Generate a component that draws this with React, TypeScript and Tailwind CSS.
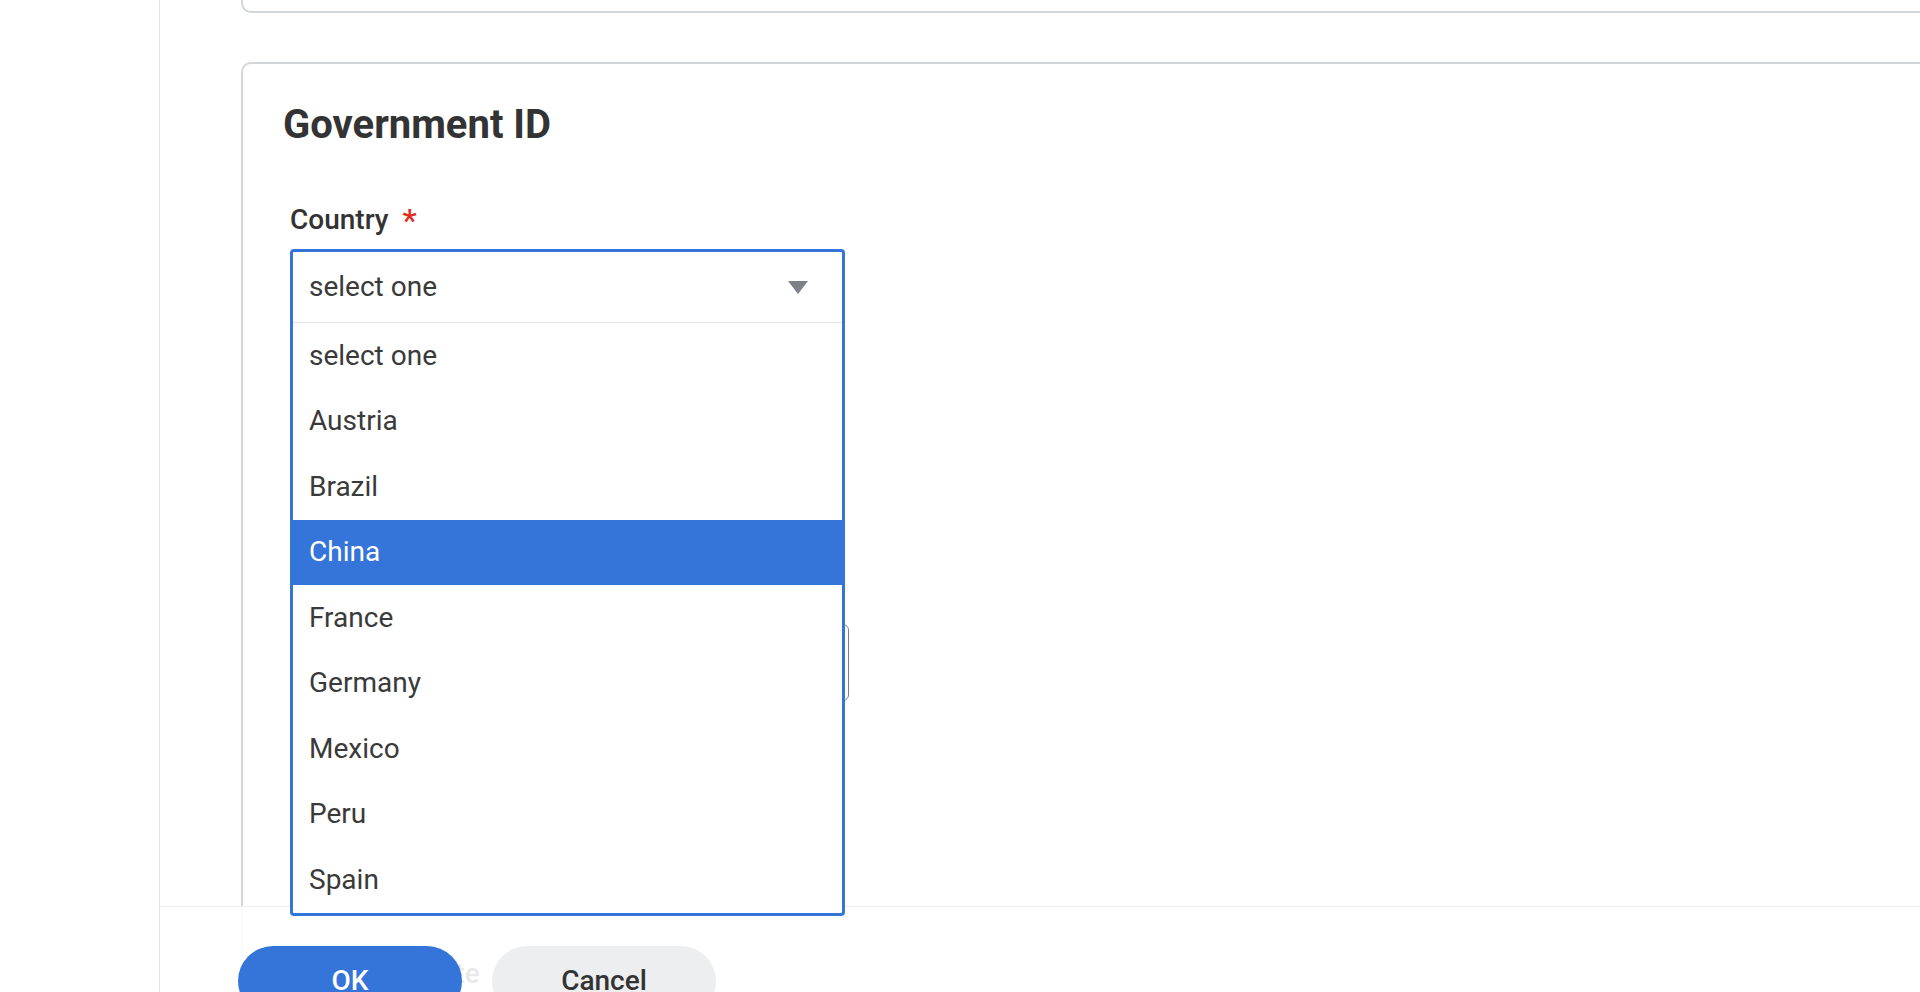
import React from 'react'

const countries = ['select one', 'Austria', 'Brazil', 'China', 'France', 'Germany', 'Mexico', 'Peru', 'Spain']

const FieldLabel: React.FC<{ text: string; required?: boolean }> = ({ text, required }) => (
  <div className="flex items-center h-[34px] text-[28px] leading-[34px] font-medium text-[#333333]">
    <span>{text}</span>
    {required && <span className="ml-[14px] text-[32px] text-[#de2e21]">*</span>}
  </div>
)

const CountrySelect: React.FC = () => (
  <div className="relative w-[555px] h-[74px] mt-[12px]">
    <div className="absolute top-0 left-0 w-full z-30 bg-white border-[3px] border-[#3574d9] rounded-[4px] text-[28px] text-[#3a3a3a]">
      <div className="flex items-center justify-between h-[71px] pl-[16px] pr-[34px] border-b border-[#e2e4e7]">
        <span>select one</span>
        <svg width="20" height="13" viewBox="0 0 20 13">
          <path d="M0 0 L20 0 L10 13 Z" fill="#7b8089" />
        </svg>
      </div>
      <div className="flex flex-col">
        {countries.map((c) =>
          c === 'China' ? (
            <div key={c} className="h-[65.5px] flex items-center -mx-[3px] pl-[19px] bg-[#3574d9] text-white">
              {c}
            </div>
          ) : (
            <div key={c} className="h-[65.5px] flex items-center pl-[16px]">
              {c}
            </div>
          )
        )}
      </div>
    </div>
  </div>
)

export default function App() {
  return (
    <div className="relative w-[1920px] h-[992px] overflow-hidden bg-white flex font-['Roboto',sans-serif]">
      <div className="w-[160px] shrink-0 border-r border-[#e3e5e8]" />
      <div className="flex-1 pl-[81px]">
        <div className="w-[1720px] h-[13px] border-l-2 border-b-2 border-[#d2d6db] rounded-bl-[10px]" />
        <div className="mt-[49px] w-[1720px] h-[1100px] border-l-2 border-t-2 border-[#d2d6db] rounded-tl-[10px] pl-[40px] pt-[37px]">
          <h2 className="text-[40px] leading-[48px] font-bold text-[#333333]">Government ID</h2>
          <div className="pl-[7px] mt-[54px]">
            <FieldLabel text="Country" required />
            <CountrySelect />

            {/* fields sitting under the open list */}
            <div className="mt-[51px]">
              <div className="h-[34px]" />
              <div className="mt-[12px] w-[420px] h-[77px] border border-[#7b8089] rounded-[6px]" />
            </div>

            <div className="mt-[81px]">
              <div className="h-[34px]" />
              <div className="mt-[12px] w-[559px] h-[77px] border border-[#7b8089] rounded-[6px]" />
            </div>

            <div className="mt-[256px]">
              <FieldLabel text="Expiration Date" />
            </div>
          </div>
        </div>
      </div>

      <div className="absolute left-[160px] right-0 bottom-0 h-[86px] bg-white/[0.89] border-t border-[#eceef0] z-20 pl-[78px] pt-[39px] flex gap-[30px]">
        <button className="w-[224px] h-[70px] rounded-full bg-[#3574d9] text-white text-[28px] font-medium">OK</button>
        <button className="w-[224px] h-[70px] rounded-full bg-[#eceef0] text-[#333333] text-[28px] font-medium">Cancel</button>
      </div>
    </div>
  )
}
